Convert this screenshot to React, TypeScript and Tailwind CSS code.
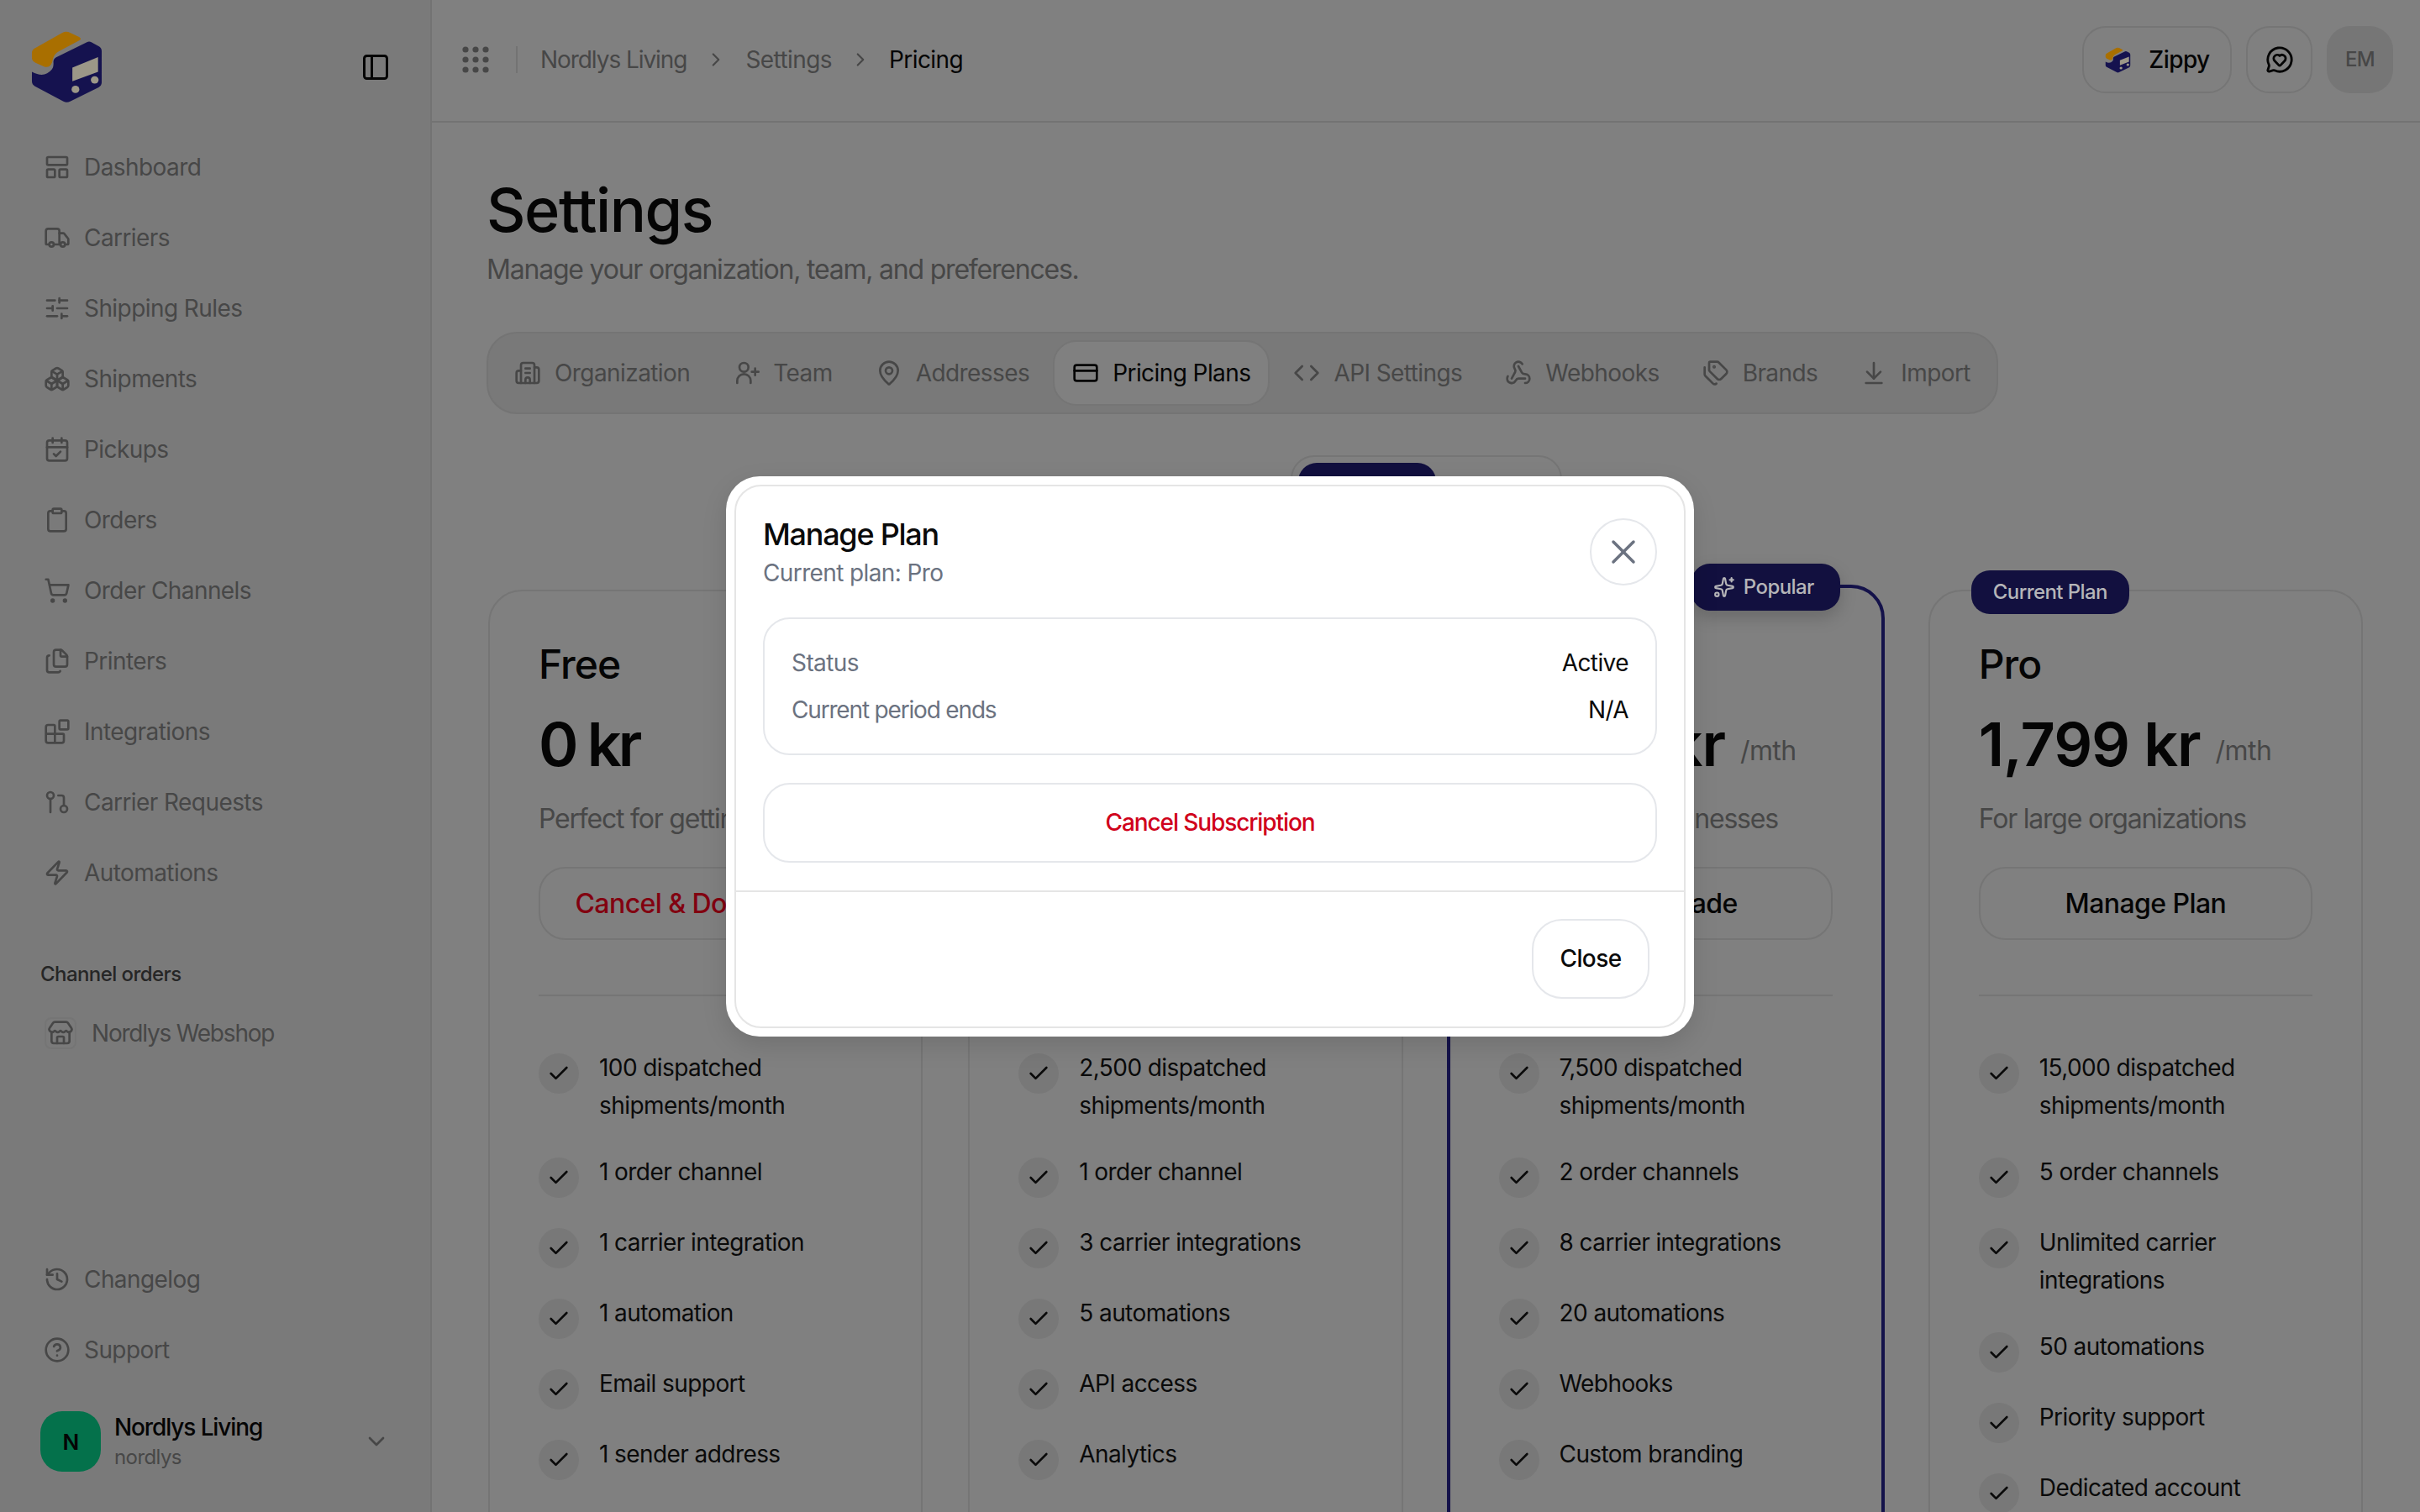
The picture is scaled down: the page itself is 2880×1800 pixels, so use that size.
import {
  ArrowDownToLine,
  Blocks,
  Boxes,
  Building2,
  CalendarCheck,
  Check,
  ChevronDown,
  ChevronRight,
  CircleHelp,
  Clipboard,
  Code,
  CreditCard,
  Files,
  GitPullRequest,
  History,
  LayoutPanelTop,
  MapPin,
  MessageCircleHeart,
  PanelLeft,
  ShoppingCart,
  SlidersHorizontal,
  Sparkles,
  Store,
  Tags,
  Truck,
  Webhook,
  X,
  Zap,
} from "lucide-react";
import type { ElementType } from "react";

function TeamIcon({ size, strokeWidth }: { size: number; strokeWidth: number }) {
  return (
    <svg width={size} height={size} viewBox="0 0 24 24" fill="none" stroke="currentColor" strokeWidth={strokeWidth} strokeLinecap="round">
      <circle cx="10" cy="7" r="4" />
      <path d="M4 21v-2a6 6 0 0 1 12 0v2" />
      <path d="M20 8v6M17 11h6" />
    </svg>
  );
}

const mainNav: [ElementType, string][] = [
  [LayoutPanelTop, "Dashboard"],
  [Truck, "Carriers"],
  [SlidersHorizontal, "Shipping Rules"],
  [Boxes, "Shipments"],
  [CalendarCheck, "Pickups"],
  [Clipboard, "Orders"],
  [ShoppingCart, "Order Channels"],
  [Files, "Printers"],
  [Blocks, "Integrations"],
  [GitPullRequest, "Carrier Requests"],
  [Zap, "Automations"],
];

const tabs: [ElementType, string][] = [
  [Building2, "Organization"],
  [TeamIcon, "Team"],
  [MapPin, "Addresses"],
  [CreditCard, "Pricing Plans"],
  [Code, "API Settings"],
  [Webhook, "Webhooks"],
  [Tags, "Brands"],
  [ArrowDownToLine, "Import"],
];

type Plan = {
  name: string;
  price: string;
  desc: string;
  action: string;
  perMonth?: boolean;
  danger?: boolean;
  popular?: boolean;
  current?: boolean;
  features: string[];
};

// the second card's head sits fully behind the dialog
const plans: Plan[] = [
  {
    name: "Free",
    price: "0 kr",
    desc: "Perfect for getting started",
    action: "Cancel & Downgrade",
    danger: true,
    features: ["100 dispatched shipments/month", "1 order channel", "1 carrier integration", "1 automation", "Email support", "1 sender address"],
  },
  {
    name: "\u00a0",
    price: "\u00a0",
    desc: "\u00a0",
    action: "\u00a0",
    features: ["2,500 dispatched shipments/month", "1 order channel", "3 carrier integrations", "5 automations", "API access", "Analytics"],
  },
  {
    name: "Growth",
    price: "1,299 kr",
    desc: "For growing businesses",
    action: "Downgrade",
    perMonth: true,
    popular: true,
    features: ["7,500 dispatched shipments/month", "2 order channels", "8 carrier integrations", "20 automations", "Webhooks", "Custom branding"],
  },
  {
    name: "Pro",
    price: "1,799 kr",
    desc: "For large organizations",
    action: "Manage Plan",
    perMonth: true,
    current: true,
    features: ["15,000 dispatched shipments/month", "5 order channels", "Unlimited carrier integrations", "50 automations", "Priority support", "Dedicated account manager"],
  },
];

function Logo({ size }: { size: number }) {
  return (
    <svg width={size} height={size} viewBox="100 100 280 280" className="shrink-0">
      <path
        d="M128 172 L224 118 Q238 110 252 118 L284 133 Q296 140 284 146 L212 184 Q194 194 190 212 Q186 246 160 240 L128 226 Q115 220 115 208 L115 190 Q115 178 128 172 Z"
        fill="#a96f00"
      />
      <path
        d="M312 152 Q320 148 328 152 L354 166 Q365 172 365 184 L365 296 Q365 308 354 314 L252 364 Q240 370 228 364 L126 310 Q115 304 115 292 L115 258 Q160 282 186 250 Q194 240 192 222 Q192 212 202 206 Z"
        fill="#15124f"
      />
      <path d="M260 243 L352 205 L352 258 L260 292 Z" fill="#9c9788" />
      <ellipse cx="271" cy="321" rx="14" ry="13" fill="#9c9788" />
      <ellipse cx="340" cy="287" rx="14" ry="13" fill="#9c9788" />
    </svg>
  );
}

function NavItem({ icon: Icon, label }: { icon: ElementType; label: string }) {
  return (
    <div className="flex h-[72px] shrink-0 items-center gap-[16px] pl-[52px] text-[28px] text-[#474747]">
      <Icon size={32} strokeWidth={2} className="shrink-0 text-[#474747]" />
      <span>{label}</span>
    </div>
  );
}

function Sidebar() {
  return (
    <aside className="flex h-full w-[514px] shrink-0 flex-col border-r-2 border-[#737373] bg-[#7a7a7a]">
      <div className="flex h-[163px] shrink-0 items-start justify-between pl-[33px] pr-[47px] pt-[33px]">
        <Logo size={93} />
        <PanelLeft size={36} strokeWidth={2} className="mt-[29px] text-[#050505]" />
      </div>
      <nav className="flex flex-col gap-[12px]">
        {mainNav.map(([icon, label]) => (
          <NavItem key={label} icon={icon} label={label} />
        ))}
      </nav>
      <p className="mt-[69px] pl-[48px] text-[24px] leading-[32px] font-medium text-[#262626]">Channel orders</p>
      <div className="mt-[18px] flex h-[72px] items-center gap-[18px] pl-[53px] text-[28px] tracking-[-0.043em] text-[#474747]">
        <span className="flex h-[38px] w-[38px] items-center justify-center rounded-[8px] border-2 border-[#757575]">
          <Store size={32} strokeWidth={2} />
        </span>
        <span>Nordlys Webshop</span>
      </div>
      <div className="flex-1" />
      <div className="flex flex-col gap-[12px]">
        <NavItem icon={History} label="Changelog" />
        <NavItem icon={CircleHelp} label="Support" />
      </div>
      <div className="mb-[48px] mt-[37px] flex items-center pl-[48px] pr-[48px]">
        <span className="flex h-[72px] w-[72px] items-center justify-center rounded-[26px] bg-[#04714b] text-[26px] font-semibold text-[#050505]">
          N
        </span>
        <div className="ml-[16px] flex-1">
          <p className="text-[28px] leading-[38px] font-medium tracking-[-0.04em] text-[#050505]">Nordlys Living</p>
          <p className="text-[24px] leading-[34px] text-[#474747]">nordlys</p>
        </div>
        <ChevronDown size={32} strokeWidth={2} className="text-[#474747]" />
      </div>
    </aside>
  );
}

function GridDots() {
  const dots = [4, 16, 28];
  return (
    <svg width="32" height="32" viewBox="0 0 32 32" className="shrink-0 text-[#474747]">
      {dots.map((y) => dots.map((x) => <circle key={`${x}-${y}`} cx={x} cy={y} r="3.6" fill="currentColor" />))}
    </svg>
  );
}

function Topbar() {
  return (
    <header className="flex h-[146px] shrink-0 items-center justify-between border-b-2 border-[#737373] pb-[2px] pl-[36px] pr-[32px]">
      <div className="flex items-center text-[28px] text-[#474747]">
        <GridDots />
        <span className="ml-[32px] mr-[27px] h-[32px] w-[2px] bg-[#737373]" />
        <span className="tracking-[-0.038em]">Nordlys Living</span>
        <ChevronRight size={26} className="mx-[22px]" />
        <span>Settings</span>
        <ChevronRight size={26} className="mx-[21px]" />
        <span className="text-[#050505]">Pricing</span>
      </div>
      <div className="flex items-center gap-[17px]">
        <button className="flex h-[80px] w-[178px] items-center justify-center gap-[20px] rounded-[28px] border-2 border-[#757575] text-[28px] font-medium text-[#050505]">
          <Logo size={33} />
          Zippy
        </button>
        <button className="flex h-[80px] w-[79px] items-center justify-center rounded-[28px] border-2 border-[#757575] text-[#050505]">
          <MessageCircleHeart size={34} strokeWidth={2} />
        </button>
        <span className="flex h-[80px] w-[79px] items-center justify-center rounded-[28px] bg-[#767676] text-[24px] font-medium text-[#474747]">
          EM
        </span>
      </div>
    </header>
  );
}

function Feature({ text }: { text: string }) {
  return (
    <li className="flex gap-[24px]">
      <span className="mt-[5px] flex h-[48px] w-[48px] shrink-0 items-center justify-center rounded-full bg-[#787878]">
        <Check size={28} strokeWidth={2.25} className="text-[#0a0a0a]" />
      </span>
      <span className="pb-[3px] text-[28px] leading-[45px] text-[#0a0a0a]">{text}</span>
    </li>
  );
}

function PlanCard({ plan }: { plan: Plan }) {
  const frame = plan.popular
    ? "-mx-[2px] -mt-[6px] h-[1206px] border-[4px] border-[#14124a] px-[58px] pt-[61px]"
    : "h-[1200px] border-2 border-[#757575] px-[58px] pt-[57px]";
  return (
    <div className={`relative rounded-[40px] ${frame}`}>
      {plan.popular && (
        <span className="absolute -top-[29px] right-[49px] flex h-[56px] items-center gap-[10px] rounded-[22px] bg-[#12103f] pl-[26px] pr-[31px] text-[24px] font-medium text-[#b5b5b8] shadow-[0_8px_20px_rgba(0,0,0,0.18)]">
          <Sparkles size={26} strokeWidth={2} />
          Popular
        </span>
      )}
      {plan.current && (
        <span className="absolute -top-[25px] left-[49px] flex h-[52px] items-center rounded-[22px] bg-[#12103f] px-[26px] text-[24px] font-medium text-[#b5b5b8]">
          Current Plan
        </span>
      )}
      <h3 className="text-[48px] leading-[60px] font-medium tracking-[-0.02em] text-[#050505]">{plan.name}</h3>
      <div className="mt-[25px] flex items-end gap-[18px]">
        <span
          className={`text-[72px] leading-[80px] font-semibold text-[#050505] ${
            plan.perMonth ? "tracking-[-0.015em]" : "tracking-[-0.055em]"
          }`}
        >
          {plan.price}
        </span>
        {plan.perMonth && <span className="mb-[10px] text-[32px] leading-[44px] text-[#474747]">/mth</span>}
      </div>
      <p className="mt-[25px] whitespace-nowrap text-[32px] leading-[48px] tracking-[-0.038em] text-[#474747]">{plan.desc}</p>
      <button
        className={`mt-[33px] flex h-[87px] w-full items-center justify-center rounded-[32px] border-2 border-[#757575] text-[32px] font-medium ${
          plan.danger ? "text-[#820010]" : "text-[#050505]"
        }`}
      >
        {plan.action}
      </button>
      <div className="mt-[65px] h-[2px] bg-[#757575]" />
      <ul className="mt-[63px] flex flex-col gap-[31px]">
        {plan.features.map((f) => (
          <Feature key={f} text={f} />
        ))}
      </ul>
    </div>
  );
}

function Content() {
  return (
    <main className="flex min-w-0 flex-1 flex-col overflow-hidden pl-[65px] pr-[65px] pt-[64px]">
      <h1 className="shrink-0 text-[72px] leading-[80px] font-medium tracking-[-0.02em] text-[#050505]">Settings</h1>
      <p className="mt-[9px] shrink-0 text-[32px] leading-[44px] tracking-[-0.038em] text-[#474747]">
        Manage your organization, team, and preferences.
      </p>
      <div className="mt-[52px] flex w-fit shrink-0 gap-[5px] rounded-[36px] border-2 border-[#747474] bg-[#797979] p-[8px]">
        {tabs.map(([Icon, label]) => {
          const active = label === "Pricing Plans";
          return (
            <div
              key={label}
              className={`flex h-[78px] items-center gap-[16px] rounded-[28px] border-2 px-[21px] text-[28px] ${
                active ? "border-[#757575] bg-[#808080] text-[#050505]" : "border-transparent text-[#474747]"
              }`}
            >
              <Icon size={32} strokeWidth={2} />
              {label}
            </div>
          );
        })}
      </div>
      <div className="mt-[49px] flex h-[80px] w-[323px] shrink-0 self-center rounded-[28px] border-2 border-[#757575] p-[7px]">
        <span className="w-[164px] rounded-[22px] bg-[#12103f]" />
      </div>
      <div className="ml-[2px] mt-[80px] grid w-[2231px] shrink-0 grid-cols-4 gap-[54px]">
        {plans.map((p, i) => (
          <PlanCard key={i} plan={p} />
        ))}
      </div>
    </main>
  );
}

function ManagePlanDialog() {
  return (
    <div className="absolute inset-0 flex items-center justify-center">
      <div className="w-[1152px] rounded-[40px] bg-white p-[10px] shadow-[0_10px_30px_rgba(0,0,0,0.12)]">
        <div className="rounded-[32px] border-2 border-[#e5e5e5]">
          <div className="px-[32px] pb-[33px] pt-[33px]">
            <div className="flex items-center justify-between">
              <div>
                <h2 className="text-[36px] leading-[48px] font-medium tracking-[-0.035em] text-[#0a0a0a]">Manage Plan</h2>
                <p className="mt-[2px] text-[28px] leading-[40px] tracking-[-0.022em] text-[#6b7280]">Current plan: Pro</p>
              </div>
              <button className="flex h-[80px] w-[80px] items-center justify-center rounded-full border-2 border-[#e5e7eb] text-[#6b7280]">
                <X size={48} strokeWidth={1.75} />
              </button>
            </div>
            <div className="mt-[33px] flex flex-col gap-[16px] rounded-[32px] border-2 border-[#e5e7eb] px-[32px] py-[32px] text-[28px] leading-[40px]">
              <div className="flex justify-between">
                <span className="text-[#6b7280]">Status</span>
                <span className="text-[#0a0a0a]">Active</span>
              </div>
              <div className="flex justify-between">
                <span className="tracking-[-0.042em] text-[#6b7280]">Current period ends</span>
                <span className="text-[#0a0a0a]">N/A</span>
              </div>
            </div>
            <button className="mt-[33px] flex h-[95px] w-full items-center justify-center rounded-[32px] border-2 border-[#e5e7eb] text-[28px] font-medium tracking-[-0.039em] text-[#d0021b]">
              Cancel Subscription
            </button>
          </div>
          <div className="flex justify-end border-t-2 border-[#e5e5e5] pb-[33px] pr-[41px] pt-[32px]">
            <button className="flex h-[95px] w-[140px] items-center justify-center rounded-[36px] border-2 border-[#e5e7eb] text-[28px] font-medium text-[#0a0a0a]">
              Close
            </button>
          </div>
        </div>
      </div>
    </div>
  );
}

export default function App() {
  return (
    <div className="relative flex h-screen w-screen overflow-hidden bg-[#808080] tracking-[-0.036em] [font-family:Inter,sans-serif]">
      <Sidebar />
      <div className="flex min-w-0 flex-1 flex-col">
        <Topbar />
        <Content />
      </div>
      <ManagePlanDialog />
    </div>
  );
}
